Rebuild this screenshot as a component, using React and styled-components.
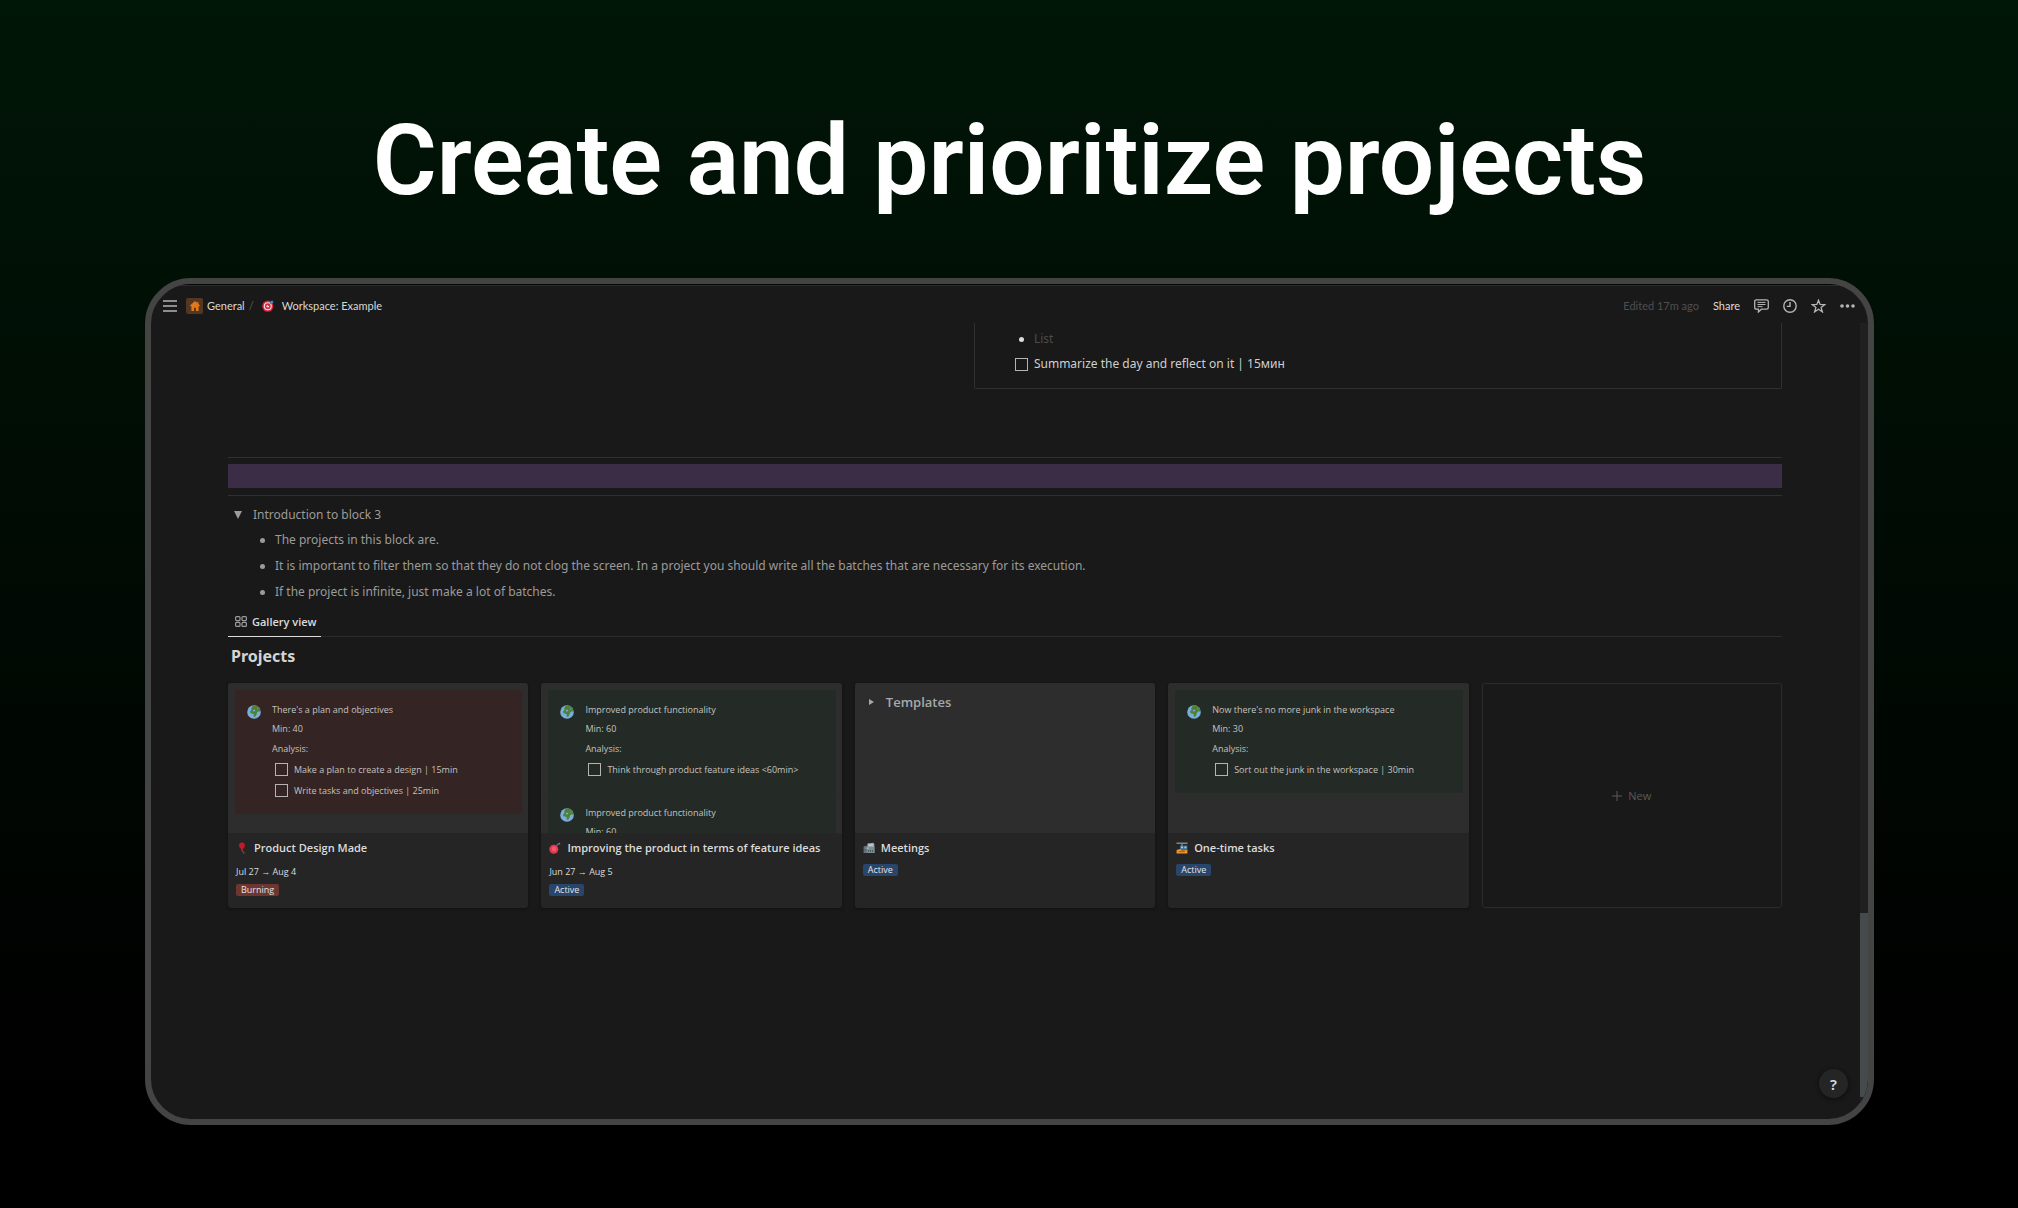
import { useState } from 'react';
import styled, { createGlobalStyle } from 'styled-components';

const NOTES = [
  'The projects in this block are.',
  'It is important to filter them so that they do not clog the screen. In a project you should write all the batches that are necessary for its execution.',
  'If the project is infinite, just make a lot of batches.'
];

const PROJECTS = [
  {
    title: 'Product Design Made',
    icon: 'balloon',
    date: 'Jul 27 → Aug 4',
    status: 'Burning',
    callouts: [
      {
        tone: 'red',
        title: "There's a plan and objectives",
        min: 40,
        tasks: [
          'Make a plan to create a design | 15min',
          'Write tasks and objectives | 25min'
        ]
      }
    ]
  },
  {
    title: 'Improving the product in terms of feature ideas',
    icon: 'bomb',
    date: 'Jun 27 → Aug 5',
    status: 'Active',
    callouts: [
      {
        tone: 'green',
        title: 'Improved product functionality',
        min: 60,
        tasks: ['Think through product feature ideas <60min>']
      },
      {
        tone: 'green',
        title: 'Improved product functionality',
        min: 60
      }
    ]
  },
  {
    title: 'Meetings',
    icon: 'building',
    status: 'Active',
    toggle: 'Templates',
    callouts: []
  },
  {
    title: 'One-time tasks',
    icon: 'tram',
    status: 'Active',
    callouts: [
      {
        tone: 'green',
        title: "Now there's no more junk in the workspace",
        min: 30,
        tasks: ['Sort out the junk in the workspace | 30min']
      }
    ]
  }
];

function Globe() {
  return (
    <svg width="14" height="14" viewBox="0 0 14 14" aria-hidden="true">
      <circle cx="7" cy="7" r="6.8" fill="#78aedb" />
      <path
        d="M6 .6 9.600.7l3 2.600.8 3.400-1.800-.5-1.400 1-.8 2.600-1.400 2.200-1.200-.4-.2-2.600L3.600 8.200 3 6.600l1.600-1.800L4.200 3z"
        fill="#4f8038"
      />
      <path d="M5.600 5.600 7.600 4.600l.8 1.200-1.800 1z" fill="#78aedb" />
      <path d="M10.200 3.200l1.200.8-.8.8z" fill="#78aedb" />
    </svg>
  );
}

function ProjectIcon({ name }) {
  return (
    <svg width="12" height="12" viewBox="0 0 12 12" aria-hidden="true">
      {name === 'balloon' && (
        <>
          <path d="M6.2 7.400q-.8 1.600.6 2.200t1.200 2" fill="none" stroke="#a8692c" />
          <path d="M3 3.600a2.900 3.100 0 0 1 5.800 0c0 1.800-1.300 3-2.300 3.800l.3.900H5.200l.3-.9C4.400 6.600 3 5.400 3 3.600z" fill="#c8162c" />
        </>
      )}
      {name === 'bomb' && (
        <>
          <path d="M7.600 4.400q.4-2.400 2.400-2.400" fill="none" stroke="#57676f" strokeWidth="1.3" />
          <circle cx="10.4" cy="1.6" r=".9" fill="#7b8a91" />
          <circle cx="4.8" cy="7.2" r="4.5" fill="#dd3a52" />
          <circle cx="5" cy="7" r="2.400" fill="#f4566d" />
        </>
      )}
      {name === 'building' && (
        <>
          <path d="M4.500 1.500 10.500.8l.9 2V11H4z" fill="#9aa9b2" />
          <path d="M.6 4.500 4 3.400V11H.6z" fill="#66757f" />
          <path d="M4 5h7.400v6H4z" fill="#7d8c95" />
          <path d="M5 2.500h5v1H5z" fill="#d5dee3" />
          <path d="M3.500 5.400h2.200v1.400H3.500z" fill="#9fce8a" />
          <path d="M5 8h1v2H5zM7 8h1v2H7zM9 8h1v2H9zM1.500 7h1v2h-1z" fill="#4b5a63" />
        </>
      )}
      {name === 'tram' && (
        <>
          <path d="M.5 1.200h11M6 1.200V4" stroke="#7d8790" strokeWidth="1.400" />
          <path d="M4 3.600h7.400v5H4z" fill="#3b6f93" />
          <path d="M5 4.600h2v1.600H5zM8.400 4.600h2v1.600h-2z" fill="#a8c8dc" />
          <path d="M.6 8 4 7l2 1.600 5.400-.6v3.600H.6z" fill="#f2962a" />
          <path d="M2.800 9.600h6" stroke="#8a4f16" strokeWidth=".8" />
        </>
      )}
    </svg>
  );
}

function TargetIcon() {
  return (
    <svg width="12" height="12" viewBox="0 0 12 12" aria-hidden="true">
      <circle cx="5.800" cy="6.200" r="5.600" fill="#d7263d" />
      <circle cx="5.800" cy="6.200" r="4" fill="#f3dfe2" />
      <circle cx="5.800" cy="6.200" r="2.900" fill="#d7263d" />
      <circle cx="5.800" cy="6.200" r="1.300" fill="#f3dfe2" />
      <path d="M5.800 6.200 9.400 2.600" stroke="#54626b" strokeWidth=".9" />
      <path d="M8.200 3.800V2L10.200.3l.5 1.100 1.100.4L10 3.800z" fill="#3f8fd0" />
    </svg>
  );
}

function HouseIcon() {
  return (
    <svg width="10" height="10" viewBox="0 0 10 10" aria-hidden="true">
      <path d="M5 0 0 4.600l.5.6h.9V10H4V6.800h2V10h2.600V5.200h.9l.5-.6-1.600-1.500V1H7.100v.9z" fill="#e2771b" />
    </svg>
  );
}

function Callout({ tone, title, min, tasks = [] }) {
  return (
    <CalloutBox $tone={tone}>
      <Globe />
      <CalloutBody>
        <CalloutLine>{title}</CalloutLine>
        <CalloutLine>Min: {min}</CalloutLine>
        {tasks.length > 0 && <AnalysisLine>Analysis:</AnalysisLine>}
        {tasks.map((task) => (
          <Task key={task}>
            <Checkbox type="checkbox" />
            {task}
          </Task>
        ))}
      </CalloutBody>
    </CalloutBox>
  );
}

function ProjectCard({ project }) {
  return (
    <Card>
      <Preview>
        {project.callouts.map((callout, i) => (
          <Callout key={i} {...callout} />
        ))}
        {project.toggle && (
          <TemplateToggle type="button">
            <svg width="5" height="6" viewBox="0 0 5 6" aria-hidden="true">
              <path d="M0 0 5 3 0 6z" fill="currentColor" />
            </svg>
            {project.toggle}
          </TemplateToggle>
        )}
      </Preview>
      <CardInfo>
        <CardTitle>
          <ProjectIcon name={project.icon} />
          {project.title}
        </CardTitle>
        {project.date && <CardDate>{project.date}</CardDate>}
        <Badge $status={project.status}>{project.status}</Badge>
      </CardInfo>
    </Card>
  );
}

export default function App() {
  const [open, setOpen] = useState(true);

  return (
    <Page>
      <GlobalStyle />
      <Heading>Create and prioritize projects</Heading>

      <Window>
        <TopBar>
          <IconButton type="button" aria-label="Menu">
            <svg width="14" height="12" viewBox="0 0 14 12">
              <path d="M0 1h14M0 6h14M0 11h14" stroke="currentColor" strokeWidth="1.3" />
            </svg>
          </IconButton>
          <Breadcrumbs>
            <HomeBox>
              <HouseIcon />
            </HomeBox>
            <Crumb href="#general">General</Crumb>
            <Slash>/</Slash>
            <TargetIcon />
            <Crumb href="#workspace">Workspace: Example</Crumb>
          </Breadcrumbs>
          <Actions>
            <Edited>Edited 17m ago</Edited>
            <ShareButton type="button">Share</ShareButton>
            <IconButton type="button" aria-label="Comments">
              <svg width="15" height="14" viewBox="0 0 15 14" fill="none" stroke="currentColor" strokeWidth="1.3">
                <path d="M2.400.8h10.200q1.700 0 1.700 1.700v6q0 1.700-1.700 1.700H7.400L4.400 13v-2.800h-2Q.7 10.200.7 8.500v-6Q.7.800 2.400.800z" />
                <path d="M3.500 3.400h8M3.500 5.500h8M3.500 7.600h5" strokeWidth="1" />
              </svg>
            </IconButton>
            <IconButton type="button" aria-label="Updates">
              <svg width="14" height="14" viewBox="0 0 14 14" fill="none" stroke="currentColor" strokeWidth="1.4">
                <circle cx="7" cy="7" r="6.2" />
                <path d="M7 3v4.400H3.800" />
              </svg>
            </IconButton>
            <IconButton type="button" aria-label="Favorite">
              <svg width="15" height="14" viewBox="0 0 15 14" fill="none" stroke="currentColor" strokeWidth="1.3">
                <path d="M7.500 1.200l1.600 4.200 4.600.2-3.600 2.800 1.300 4.500-3.900-2.600-3.900 2.600 1.300-4.500L1.300 5.600l4.600-.2z" />
              </svg>
            </IconButton>
            <IconButton type="button" aria-label="More">
              <svg width="15" height="4" viewBox="0 0 15 4" fill="currentColor">
                <circle cx="2" cy="2" r="1.8" />
                <circle cx="7.5" cy="2" r="1.8" />
                <circle cx="13" cy="2" r="1.8" />
              </svg>
            </IconButton>
          </Actions>
        </TopBar>

        <Body>
          <Content>
            <DayPanel>
              <PanelItem>
                <Dot $light />
                <Muted>List</Muted>
              </PanelItem>
              <PanelTask>
                <Checkbox type="checkbox" />
                Summarize the day and reflect on it | 15мин
              </PanelTask>
            </DayPanel>

            <Divider />
            <Stripe />
            <Divider />

            <ToggleButton type="button" onClick={() => setOpen(!open)}>
              <svg width="8" height="8" viewBox="0 0 8 8" aria-hidden="true">
                <path d={open ? 'M0 0h8L4 8z' : 'M0 0v8l8-4z'} fill="currentColor" />
              </svg>
              Introduction to block 3
            </ToggleButton>
            {open && (
              <Notes>
                {NOTES.map((note) => (
                  <Note key={note}>
                    <Dot />
                    {note}
                  </Note>
                ))}
              </Notes>
            )}

            <Tabs>
              <Tab type="button">
                <svg width="12" height="11" viewBox="0 0 12 11" fill="none" stroke="#9b9b9b" strokeWidth="1.2">
                  <rect x=".6" y=".6" width="4.400" height="4" rx="1" />
                  <rect x="7" y=".6" width="4.400" height="4" rx="1" />
                  <rect x=".6" y="6.400" width="4.400" height="4" rx="1" />
                  <rect x="7" y="6.400" width="4.400" height="4" rx="1" />
                </svg>
                Gallery view
              </Tab>
            </Tabs>
            <SectionTitle>Projects</SectionTitle>

            <Gallery>
              {PROJECTS.map((project) => (
                <ProjectCard key={project.title} project={project} />
              ))}
              <NewCard type="button">
                <svg width="10" height="10" viewBox="0 0 10 10" aria-hidden="true">
                  <path d="M5 0v10M0 5h10" stroke="currentColor" />
                </svg>
                New
              </NewCard>
            </Gallery>
          </Content>
          <ScrollTrack>
            <ScrollThumb />
          </ScrollTrack>
        </Body>
        <HelpButton type="button" aria-label="Help">?</HelpButton>
      </Window>
    </Page>
  );
}

// styles
const GlobalStyle = createGlobalStyle`
  * {
    box-sizing: border-box;
  }

  body {
    margin: 0;
    background: #000;
  }

  button {
    margin: 0;
    padding: 0;
    border: none;
    background: none;
    color: inherit;
    font: inherit;
    cursor: pointer;
  }

  svg {
    display: block;
    flex: none;
  }
`;

const Page = styled.div`
  display: flex;
  flex-direction: column;
  min-height: 100vh;
  padding: 105px 144px 83px 145px;
  background: linear-gradient(#001607, #000 90%);
  font-family: 'Noto Sans', 'Open Sans', sans-serif;
  font-size: 12px;
  line-height: 16px;
`;

const Heading = styled.h1`
  margin: 0 0 61px;
  color: #fff;
  font-family: Roboto, sans-serif;
  font-size: 98px;
  font-weight: 600;
  line-height: 112px;
  text-align: center;
`;

const Window = styled.main`
  position: relative;
  display: flex;
  flex: 1;
  flex-direction: column;
  overflow: hidden;
  border: 6px solid #444;
  border-radius: 46px;
  background: #191919;
  color: #cfcfcf;
`;

const TopBar = styled.header`
  display: flex;
  align-items: center;
  height: 39px;
  padding: 3px 13px 0 12px;
  border-top: 1px solid #050505;
  box-shadow: inset 0 1px #2b2b2b;
  font-family: Lato, sans-serif;
  font-size: 11px;
`;

const IconButton = styled.button`
  display: flex;
  color: #b4b4b4;
`;

const Breadcrumbs = styled.nav`
  display: flex;
  align-items: center;
  gap: 4px;
  margin-left: 9px;
`;

const HomeBox = styled.span`
  display: flex;
  align-items: center;
  justify-content: center;
  width: 17px;
  height: 16px;
  border-radius: 2px;
  background: #55361f;
`;

const Crumb = styled.a`
  color: #d8d8d8;
  text-decoration: none;

  svg + & {
    margin-left: 4px;
  }
`;

const Slash = styled.span`
  margin-right: 4px;
  color: #5a5a5a;
`;

const Actions = styled.div`
  display: flex;
  align-items: center;
  gap: 14px;
  margin-left: auto;
`;

const Edited = styled.span`
  color: #4f4f4f;
`;

const ShareButton = styled.button`
  color: #dcdcdc;
`;

const Body = styled.div`
  display: flex;
  flex: 1;
`;

const Content = styled.div`
  flex: 1;
  min-width: 0;
  padding: 0 78px 80px 77px;
`;

const ScrollTrack = styled.div`
  display: flex;
  flex-direction: column;
  justify-content: flex-end;
  width: 8px;
  padding-bottom: 22px;
  background: #202020;
`;

const ScrollThumb = styled.div`
  height: 184px;
  background: #454a4d;
`;

const DayPanel = styled.section`
  width: 52%;
  height: 66px;
  margin: 0 0 68px auto;
  padding: 7px 40px;
  border: solid #303030;
  border-width: 0 1px 1px;
  border-radius: 0 0 2px 2px;
`;

const PanelItem = styled.div`
  display: flex;
  align-items: center;
  gap: 10px;
  height: 18px;
  padding-left: 4px;
`;

const PanelTask = styled.label`
  display: flex;
  align-items: center;
  gap: 6px;
  margin-top: 8px;
`;

const Muted = styled.span`
  color: #4b4b4b;
`;

const Dot = styled.span`
  flex: none;
  width: 5px;
  height: 5px;
  border-radius: 50%;
  background: ${(props) => (props.$light ? '#dcdcdc' : '#9b9b9b')};
`;

const Checkbox = styled.input`
  flex: none;
  width: 13px;
  height: 13px;
  margin: 0;
  border: 1px solid #b4b4b4;
  appearance: none;

  &:checked {
    background: #2383e2;
  }
`;

const Divider = styled.hr`
  height: 1px;
  margin: 0;
  border: none;
  background: #303030;
`;

const Stripe = styled.div`
  height: 24px;
  margin: 6px 0 7px;
  background: #3c2d46;
`;

const ToggleButton = styled.button`
  display: flex;
  align-items: center;
  gap: 11px;
  height: 25px;
  margin-top: 6px;
  padding-left: 6px;
  color: #9b9b9b;
`;

const Notes = styled.ul`
  margin: 0;
  padding: 0 0 0 32px;
  list-style: none;
`;

const Note = styled.li`
  display: flex;
  align-items: center;
  gap: 10px;
  min-height: 26px;
  color: #9b9b9b;
`;

const Tabs = styled.div`
  display: flex;
  height: 30px;
  margin-top: 2px;
  border-bottom: 1px solid #2b2b2b;
`;

const Tab = styled.button`
  display: flex;
  align-items: center;
  gap: 5px;
  height: 30px;
  padding: 0 4px 0 7px;
  border-bottom: 1px solid #dcdcdc;
  color: #dcdcdc;
  font-family: 'Open Sans', sans-serif;
  font-size: 11px;
  font-weight: 600;
`;

const SectionTitle = styled.h2`
  margin: 7px 0 15px 3px;
  color: #d4d4d4;
  font-size: 16px;
  font-weight: 700;
  line-height: 24px;
`;

const Gallery = styled.div`
  display: grid;
  grid-template-columns: repeat(5, minmax(0, 1fr));
  gap: 13px;
  font-family: 'Open Sans', sans-serif;
`;

const Card = styled.article`
  overflow: hidden;
  min-height: 225px;
  border-radius: 3px;
  background: #252525;
  box-shadow: 0 1px 3px #111;
`;

const Preview = styled.div`
  overflow: hidden;
  height: 150px;
  padding: 7px 6px 0 7px;
  background: #2d2d2d;
`;

const TONES = {
  red: '#352424',
  green: '#242b26'
};

const CalloutBox = styled.div`
  display: flex;
  gap: 11px;
  padding: 12px 12px 13px;
  border-radius: 2px;
  background: ${(props) => TONES[props.$tone]};
  color: #c4c2bf;
  font-size: 9px;

  & > svg {
    margin-top: 3px;
  }
`;

const CalloutBody = styled.div`
  min-width: 0;
`;

const CalloutLine = styled.div`
  height: 19px;
`;

const AnalysisLine = styled(CalloutLine)`
  padding-top: 1px;
`;

const Task = styled.label`
  display: flex;
  align-items: center;
  gap: 6px;
  height: 21px;
  padding-left: 3px;
`;

const TemplateToggle = styled.button`
  display: flex;
  align-items: center;
  gap: 12px;
  height: 24px;
  padding-left: 7px;
  color: #a8a8a8;
  font-size: 13px;
  font-weight: 600;
`;

const CardInfo = styled.div`
  padding: 7px 8px;
`;

const CardTitle = styled.h3`
  display: flex;
  align-items: center;
  gap: 6px;
  margin: 0 0 8px;
  color: #dcdcdc;
  font-size: 11px;
  font-weight: 600;
`;

const CardDate = styled.div`
  margin-bottom: 4px;
  color: #dcdcdc;
  font-size: 9px;
`;

const STATUS_COLORS = {
  Burning: '#6e3630',
  Active: '#28456c'
};

const Badge = styled.span`
  display: block;
  width: fit-content;
  padding: 0 5px;
  border-radius: 2px;
  background: ${(props) => STATUS_COLORS[props.$status]};
  color: #e4e4e4;
  font-size: 9px;
  line-height: 12px;
`;

const NewCard = styled.button`
  display: flex;
  align-items: center;
  justify-content: center;
  gap: 6px;
  min-height: 225px;
  border: 1px solid #2b2b2b;
  border-radius: 3px;
  color: #5a5a5a;
  font-size: 11px;
`;

const HelpButton = styled.button`
  position: absolute;
  right: 20px;
  bottom: 21px;
  width: 29px;
  height: 29px;
  border-radius: 50%;
  background: #252525;
  box-shadow: 0 1px 4px #0c0c0c;
  color: #dcdcdc;
  font-size: 15px;
  font-weight: 600;
`;
